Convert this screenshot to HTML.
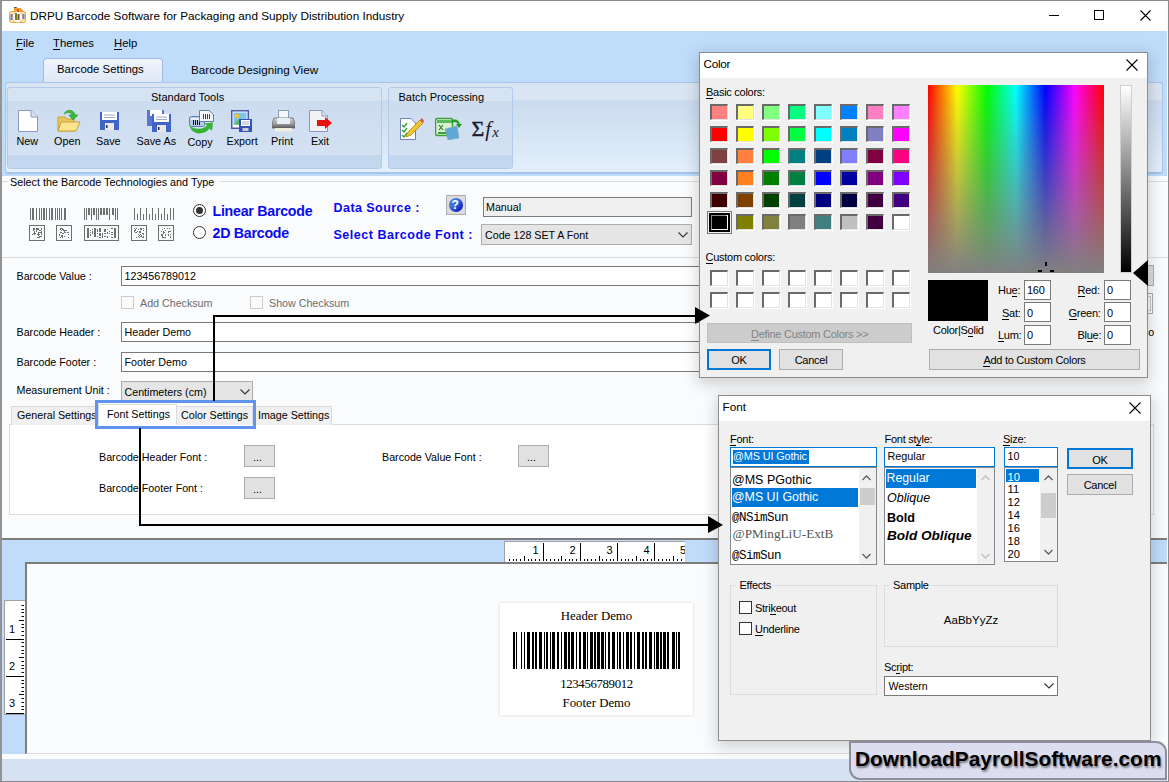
<!DOCTYPE html>
<html><head><meta charset="utf-8">
<style>
*{box-sizing:border-box;margin:0;padding:0}
html,body{width:1169px;height:782px;overflow:hidden;background:#fff}
body{position:relative;font-family:"Liberation Sans",sans-serif;font-size:10.7px;color:#000}
.a{position:absolute}
.t{position:absolute;white-space:nowrap;line-height:1}
u{text-decoration:none;border-bottom:1px solid currentColor}
.sw{width:18px;height:16px;border-style:solid;border-width:2px 1px 1px 2px;border-color:#6a6a6a #e3e3e3 #e3e3e3 #6a6a6a;box-shadow:1px 1px 0 #fff}
.dl{font-size:11px;letter-spacing:-0.27px}
.tb{width:27px;height:20px;background:#fff;border:1px solid #7a7a7a}
</style></head><body>
<!-- window frame -->
<div class="a" style="left:0;top:0;width:1169px;height:782px;border:1px solid #8a8a8a;border-left:2px solid #939393;border-right:1px solid #8a8a8a;border-bottom-width:1px;background:#f9fbfd"></div>
<!-- title bar -->
<div class="a" style="left:2px;top:1px;width:1165px;height:30px;background:#fff"></div>
<div class="t" style="left:30px;top:10px;font-size:11.75px">DRPU Barcode Software for Packaging and Supply Distribution Industry</div>

<svg class="a" style="left:9px;top:6px" width="17" height="18" viewBox="0 0 17 18"><path d="M5 1h3l-1 3h-2z" fill="#555"/><rect x="0.5" y="5.5" width="16" height="11" rx="2" fill="#f7e1b0" stroke="#e8a840"/><path d="M5 2h7l3 4h-10z" fill="#f0a030"/><ellipse cx="8.5" cy="11" rx="5" ry="5.5" fill="#fff" stroke="#f0b070" stroke-width="0.8"/><rect x="6" y="7" width="2" height="7" fill="#6a8a30"/><rect x="8.5" y="8" width="2" height="6" fill="#8a4a20"/><rect x="1.5" y="8" width="2" height="6" fill="#7080b0"/><rect x="13.5" y="8" width="2" height="5" fill="#7080b0"/><rect x="8" y="3" width="2" height="3" fill="#e05020"/></svg>
<svg class="a" style="left:1049px;top:15px" width="10" height="2" viewBox="0 0 10 2"><path d="M0 0.5H10" stroke="#000" stroke-width="1"/></svg>
<svg class="a" style="left:1094px;top:10px" width="10" height="10" viewBox="0 0 10 10"><rect x="0.5" y="0.5" width="9" height="9" fill="none" stroke="#000" stroke-width="1"/></svg>
<svg class="a" style="left:1140px;top:10px" width="11" height="11" viewBox="0 0 11 11"><path d="M0.5 0.5L10.5 10.5M10.5 0.5L0.5 10.5" stroke="#000" stroke-width="1.1"/></svg>
<!-- menu + tabstrip bg -->
<div class="a" style="left:2px;top:31px;width:1165px;height:145px;background:#bfdcfb"></div>
<div class="t" style="left:16px;top:38px;font-size:11.3px"><u>F</u>ile</div>
<div class="t" style="left:53px;top:38px;font-size:11.3px"><u>T</u>hemes</div>
<div class="t" style="left:114px;top:38px;font-size:11.3px"><u>H</u>elp</div>
<!-- tabs -->
<div class="a" style="left:43px;top:58px;width:120px;height:25px;border:1px solid #a3b8e8;border-bottom:none;border-radius:4px 4px 0 0;background:linear-gradient(#f0f4fd,#dde8f6)"></div>
<div class="t" style="left:57px;top:63.7px;font-size:11.4px">Barcode Settings</div>
<div class="t" style="left:191px;top:63.7px;font-size:11.7px">Barcode Designing View</div>
<!-- ribbon panel -->
<div class="a" style="left:5px;top:82px;width:1158px;height:92px;border:1px solid #a9c6ea;border-bottom:2px solid #a6c4ea;border-radius:3px;background:linear-gradient(#dae5f3 0,#dae5f3 17px,#cbdbee 17px,#d5e4f4 50px,#e3effc 100%)"></div>


<!-- ribbon groups -->
<div class="a" style="left:7px;top:87px;width:375px;height:82px;border:1px solid #b3cbe8;border-radius:3px;background:linear-gradient(#d6e3f3 0,#d6e3f3 13px,#ccdcef 13px,#d3e1f2 67px,#c3d7ef 67px,#c3d7ef 100%)"></div>
<div class="t" style="left:151px;top:92px;font-size:11px">Standard Tools</div>
<div class="a" style="left:388px;top:87px;width:125px;height:82px;border:1px solid #b3cbe8;border-radius:3px;background:linear-gradient(#d6e3f3 0,#d6e3f3 13px,#ccdcef 13px,#d3e1f2 67px,#c3d7ef 67px,#c3d7ef 100%)"></div>
<div class="t" style="left:398.5px;top:92px;font-size:11px">Batch Processing</div>
<div class="t" style="left:16.5px;top:136px;font-size:10.8px">New</div>
<div class="t" style="left:54px;top:136px;font-size:10.8px">Open</div>
<div class="t" style="left:96px;top:136px;font-size:10.8px">Save</div>
<div class="t" style="left:136.5px;top:136px;font-size:10.8px">Save As</div>
<div class="t" style="left:187.5px;top:137px;font-size:10.8px">Copy</div>
<div class="t" style="left:226.5px;top:136px;font-size:10.8px">Export</div>
<div class="t" style="left:271px;top:136px;font-size:10.8px">Print</div>
<div class="t" style="left:311px;top:136px;font-size:10.8px">Exit</div>
<!-- icons -->
<svg class="a" style="left:18px;top:110px" width="20" height="22" viewBox="0 0 20 22"><path d="M0.5 0.5H13L19.5 7V21.5H0.5Z" fill="#fff" stroke="#8c96c0"/><path d="M13 0.5V7H19.5" fill="#dde3ee" stroke="#8c96c0"/></svg>
<svg class="a" style="left:57px;top:109px" width="24" height="23" viewBox="0 0 24 23"><path d="M1 8H8L10 10H17V22H1Z" fill="#e8c65a" stroke="#c9a035"/><path d="M4 13H23L19 22H1Z" fill="#fbe58f" stroke="#c9a035"/><path d="M7 5C9 0 17 0 18 6L21 6L16 11L12 6L15 6C14 3 10 3 7 5Z" fill="#3cb83c" stroke="#259325" stroke-width="0.6"/></svg>
<svg class="a" style="left:100px;top:112px" width="19" height="18" viewBox="0 0 19 18"><rect x="0" y="0" width="19" height="18" fill="#3f63c6"/><rect x="2" y="0" width="15" height="8" fill="#fff"/><path d="M4 3H15M4 5.5H15" stroke="#9aa9cc"/><rect x="5" y="11" width="9" height="7" fill="#e8e8e8"/><rect x="6" y="13" width="1.5" height="3" fill="#333"/></svg>
<svg class="a" style="left:147px;top:110px" width="24" height="22" viewBox="0 0 24 22"><rect x="0" y="0" width="17" height="16" fill="#5876cf"/><rect x="3" y="0" width="12" height="6" fill="#fff"/><rect x="5" y="4" width="19" height="18" fill="#3f63c6"/><rect x="7" y="4" width="15" height="8" fill="#fff"/><path d="M9 7H20M9 9.5H20" stroke="#9aa9cc"/><rect x="10" y="15" width="9" height="7" fill="#e8e8e8"/><rect x="11" y="17" width="1.5" height="3" fill="#333"/></svg>
<svg class="a" style="left:189px;top:110px" width="25" height="24" viewBox="0 0 25 24"><rect x="0.5" y="6.5" width="15" height="10" rx="2" fill="#b9cce6" stroke="#5f7fb0"/><rect x="2" y="8" width="12" height="2" fill="#e8f0fa"/><path d="M4.5 10V15M6.5 10V15M8.5 10V15M10.5 10V15" stroke="#111" stroke-width="1"/><path d="M10.5 0.5H20L24.5 4.5V11.5H10.5Z" fill="#f4f8fd" stroke="#5f7fb0"/><path d="M14.5 4V9M16.5 4V9M18.5 4V9M20.5 4V9" stroke="#444" stroke-width="1"/><path d="M0.5 15C3 19 13 21 18 15.5L15.5 13.5L24 12.5L23 21L20.5 18.5C15 26 2 25 0.5 15Z" fill="#34b334"/></svg>
<svg class="a" style="left:231px;top:110px" width="21" height="22" viewBox="0 0 21 22"><rect x="0" y="0" width="18" height="19" fill="#4a5aa8"/><rect x="1.5" y="1.5" width="15" height="16" fill="#fff"/><rect x="2.5" y="2.5" width="13" height="12" fill="#7ec3f0"/><circle cx="6" cy="6" r="2.3" fill="#f5c02a"/><path d="M2.5 14.5L9 8L15.5 14.5Z" fill="#5cb85c"/><rect x="8" y="9" width="13" height="13" fill="#3553b8"/><rect x="10" y="10" width="9" height="6" fill="#fff"/><path d="M11 12H18M11 14H18" stroke="#8a9ac0" stroke-width="0.8"/><rect x="11.5" y="18" width="6" height="3" fill="#ccc"/></svg>
<svg class="a" style="left:272px;top:110px" width="23" height="22" viewBox="0 0 23 22"><rect x="6.5" y="0.5" width="10" height="9" fill="#f4f8fd" stroke="#8a9ac0"/><defs><linearGradient id="pg" x1="0" y1="0" x2="0" y2="1"><stop offset="0" stop-color="#d8d8d8"/><stop offset="0.6" stop-color="#9a9a9a"/><stop offset="1" stop-color="#5a5a5a"/></linearGradient></defs><path d="M2 8H21L23 14V18H0V14Z" fill="url(#pg)" stroke="#666" stroke-width="0.8"/><rect x="5" y="8" width="13" height="6" fill="#e6eef8"/><rect x="3" y="18" width="17" height="3.5" fill="#efefdf"/></svg>
<svg class="a" style="left:309px;top:110px" width="23" height="22" viewBox="0 0 23 22"><path d="M0.5 0.5H13L18.5 6V21.5H0.5Z" fill="#f2f2f2" stroke="#8c96c0"/><path d="M13 0.5V6H18.5" fill="#dde3ee" stroke="#8c96c0"/><path d="M8 10H16V7L23 13L16 19V16H8Z" fill="#e81010"/></svg>
<svg class="a" style="left:400px;top:118px" width="24" height="22" viewBox="0 0 24 22"><path d="M0.5 0.5H11L15.5 5V21.5H0.5Z" fill="#fff" stroke="#6f7fb8"/><path d="M2 7L4 9L7 5M2 12L4 14L7 10M2 17L4 19L7 15" stroke="#2ea02e" stroke-width="1.3" fill="none"/><path d="M6 19L8 14L20 2L23 5L11 17Z" fill="#f4c430" stroke="#b08a10" stroke-width="0.8"/><path d="M20 2L23 5L24 3L22 0Z" fill="#e05050"/></svg>
<svg class="a" style="left:435px;top:117px" width="29" height="23" viewBox="0 0 29 23"><rect x="0.5" y="1.5" width="17" height="17" rx="2" fill="#d8f0d0" stroke="#3da03d" stroke-width="1.5"/><rect x="2" y="3" width="14" height="3" fill="#5cb85c"/><path d="M4 8L8 13M8 8L4 13" stroke="#2e7d2e" stroke-width="1.2"/><path d="M3 16H14" stroke="#3da03d" stroke-width="2"/><path d="M10 12L22 9L24 21L13 23Z" fill="#5ea8d8" stroke="#8aa" stroke-width="0.6"/><path d="M16 4C20 1 24 3 25 7L27 7L24 11L21 7L23 7C22 5 19 4 16 6Z" fill="#1e9e1e"/></svg>
<div class="t" style="left:471.5px;top:118px;font-family:'Liberation Serif',serif;font-size:22px;color:#1a1a2a;letter-spacing:0px;-webkit-text-stroke:0.4px #1a1a2a">&Sigma;<i style="font-size:21px;-webkit-text-stroke:0;margin-left:1px">f<span style="font-size:15px;position:relative;top:1px;margin-left:1px">x</span></i></div>

<!-- main content -->
<div class="a" style="left:2px;top:181px;width:1166px;height:77px;border-top:1px solid #dcdcdc;border-bottom:1px solid #dcdcdc"></div>
<div class="a" style="left:8px;top:176px;width:212px;height:12px;background:#f9fbfd"></div>
<div class="t" style="left:10px;top:177px;font-size:10.8px">Select the Barcode Technologies and Type</div>
<!-- barcode tech icons -->
<svg class="a" style="left:26px;top:205px" width="154" height="38" viewBox="0 0 154 38" shape-rendering="crispEdges">
<path d="M4 3h1v12h-1zM6 3h2v12h-2zM10 3h1v12h-1zM13 3h1v12h-1zM15 3h1v12h-1zM17 3h2v12h-2zM20 3h1v12h-1zM23 3h1v12h-1zM25 3h2v12h-2zM29 3h1v12h-1zM31 3h1v12h-1zM33 3h1v12h-1zM35 3h1v12h-1zM38 3h2v12h-2zM58 3h1v12h-1zM60 3h1v12h-1zM62 3h2v7h-2zM65 3h1v12h-1zM67 3h2v7h-2zM70 3h1v12h-1zM72 3h1v12h-1zM74 3h2v7h-2zM77 3h2v7h-2zM80 3h2v7h-2zM83 3h1v12h-1zM86 3h2v7h-2zM89 3h1v12h-1zM91 3h1v12h-1zM108 3h1v12h-1zM111 9h1v6h-1zM114 3h1v12h-1zM117 9h1v6h-1zM120 3h1v12h-1zM123 9h1v6h-1zM126 3h1v12h-1zM129 9h1v6h-1zM132 3h1v12h-1zM135 9h1v6h-1zM138 3h1v12h-1zM141 9h1v6h-1zM144 3h1v12h-1zM147 3h1v12h-1z" fill="#6e7070"/>
<g fill="none" stroke="#6e7070" stroke-width="1"><rect x="3.5" y="20.5" width="15" height="15"/><rect x="30.5" y="20.5" width="15" height="15"/><rect x="58.5" y="20.5" width="34" height="15"/><rect x="105.5" y="20.5" width="15" height="15"/><rect x="132.5" y="20.5" width="15" height="15"/></g>
<path d="M6 29h1v1h-1zM7 23h1v1h-1zM7 24h1v1h-1zM7 25h1v1h-1zM7 28h1v1h-1zM8 23h1v1h-1zM8 24h1v1h-1zM8 26h1v1h-1zM8 27h1v1h-1zM8 28h1v1h-1zM8 29h1v1h-1zM9 28h1v1h-1zM10 23h1v1h-1zM10 24h1v1h-1zM10 25h1v1h-1zM10 26h1v1h-1zM11 23h1v1h-1zM11 24h1v1h-1zM11 29h1v1h-1zM11 32h1v1h-1zM12 23h1v1h-1zM12 24h1v1h-1zM12 27h1v1h-1zM12 28h1v1h-1zM12 29h1v1h-1zM12 30h1v1h-1zM12 32h1v1h-1zM13 25h1v1h-1zM13 27h1v1h-1zM13 29h1v1h-1zM13 31h1v1h-1zM13 32h1v1h-1zM14 25h1v1h-1zM14 27h1v1h-1zM14 31h1v1h-1zM15 23h1v1h-1zM15 24h1v1h-1zM15 26h1v1h-1zM15 27h1v1h-1zM15 28h1v1h-1zM15 29h1v1h-1zM15 31h1v1h-1zM33 29h1v1h-1zM33 30h1v1h-1zM34 23h1v1h-1zM34 24h1v1h-1zM34 27h1v1h-1zM34 32h1v1h-1zM35 23h1v1h-1zM35 25h1v1h-1zM35 27h1v1h-1zM35 30h1v1h-1zM35 31h1v1h-1zM36 23h1v1h-1zM36 24h1v1h-1zM36 28h1v1h-1zM36 30h1v1h-1zM36 31h1v1h-1zM36 32h1v1h-1zM37 24h1v1h-1zM37 25h1v1h-1zM37 28h1v1h-1zM38 25h1v1h-1zM38 26h1v1h-1zM38 27h1v1h-1zM38 31h1v1h-1zM39 25h1v1h-1zM39 27h1v1h-1zM40 25h1v1h-1zM41 27h1v1h-1zM42 27h1v1h-1zM42 29h1v1h-1zM42 32h1v1h-1zM61 23h2v1h-2zM61 24h2v1h-2zM61 25h2v1h-2zM61 26h2v1h-2zM61 27h2v1h-2zM61 28h2v1h-2zM61 29h2v1h-2zM61 30h2v1h-2zM61 31h2v1h-2zM61 32h2v1h-2zM64 25h1v1h-1zM64 27h1v1h-1zM64 29h1v1h-1zM64 30h1v1h-1zM66 24h1v1h-1zM66 26h1v1h-1zM66 27h1v1h-1zM66 28h1v1h-1zM68 23h2v1h-2zM68 24h2v1h-2zM68 25h2v1h-2zM68 26h2v1h-2zM68 27h2v1h-2zM68 28h2v1h-2zM68 29h2v1h-2zM68 30h2v1h-2zM68 31h2v1h-2zM71 24h1v1h-1zM71 25h1v1h-1zM71 26h1v1h-1zM71 28h1v1h-1zM71 31h1v1h-1zM73 23h2v1h-2zM73 24h2v1h-2zM73 25h2v1h-2zM73 26h2v1h-2zM73 28h2v1h-2zM73 29h2v1h-2zM73 30h2v1h-2zM73 32h2v1h-2zM76 28h1v1h-1zM76 29h1v1h-1zM76 30h1v1h-1zM76 31h1v1h-1zM76 32h1v1h-1zM78 24h2v1h-2zM78 25h2v1h-2zM78 26h2v1h-2zM78 28h2v1h-2zM78 31h2v1h-2zM81 24h1v1h-1zM81 27h1v1h-1zM81 28h1v1h-1zM81 31h1v1h-1zM81 32h1v1h-1zM83 26h1v1h-1zM83 28h1v1h-1zM85 23h2v1h-2zM85 27h2v1h-2zM85 29h2v1h-2zM85 32h2v1h-2zM88 23h2v1h-2zM88 24h2v1h-2zM88 25h2v1h-2zM88 26h2v1h-2zM88 27h2v1h-2zM88 28h2v1h-2zM88 29h2v1h-2zM88 30h2v1h-2zM88 31h2v1h-2zM88 32h2v1h-2zM108 23h1v1h-1zM108 25h1v1h-1zM108 26h1v1h-1zM109 24h1v1h-1zM109 25h1v1h-1zM109 27h1v1h-1zM110 23h1v1h-1zM110 27h1v1h-1zM110 32h1v1h-1zM111 26h1v1h-1zM112 24h1v1h-1zM112 29h1v1h-1zM112 31h1v1h-1zM113 26h1v1h-1zM113 27h1v1h-1zM113 30h1v1h-1zM113 32h1v1h-1zM114 23h1v1h-1zM114 24h1v1h-1zM114 26h1v1h-1zM114 27h1v1h-1zM114 29h1v1h-1zM114 31h1v1h-1zM115 23h1v1h-1zM115 24h1v1h-1zM115 30h1v1h-1zM115 31h1v1h-1zM116 28h1v1h-1zM116 32h1v1h-1zM117 23h1v1h-1zM117 25h1v1h-1zM117 28h1v1h-1zM117 29h1v1h-1zM117 31h1v1h-1zM117 32h1v1h-1zM135 26h1v1h-1zM135 29h1v1h-1zM135 30h1v1h-1zM136 24h1v1h-1zM136 29h1v1h-1zM136 30h1v1h-1zM136 31h1v1h-1zM136 32h1v1h-1zM137 26h1v1h-1zM137 27h1v1h-1zM137 28h1v1h-1zM137 32h1v1h-1zM138 23h1v1h-1zM138 27h1v1h-1zM138 32h1v1h-1zM139 25h1v1h-1zM139 29h1v1h-1zM139 30h1v1h-1zM139 32h1v1h-1zM141 23h1v1h-1zM142 26h1v1h-1zM142 27h1v1h-1zM142 29h1v1h-1zM142 30h1v1h-1zM143 23h1v1h-1zM143 26h1v1h-1zM144 26h1v1h-1zM144 29h1v1h-1zM144 31h1v1h-1zM144 32h1v1h-1z" fill="#707272"/>
</svg>
<!-- radios -->
<div class="a" style="left:193px;top:204px;width:13px;height:13px;border:1px solid #333;border-radius:50%;background:#fff"></div>
<div class="a" style="left:196px;top:207px;width:7px;height:7px;border-radius:50%;background:#333"></div>
<div class="a" style="left:193px;top:226px;width:13px;height:13px;border:1px solid #333;border-radius:50%;background:#fff"></div>
<div class="t" style="left:212.5px;top:203.8px;font-size:14.2px;font-weight:bold;color:#0a0af0;letter-spacing:-0.25px">Linear Barcode</div>
<div class="t" style="left:212.5px;top:225.8px;font-size:14.2px;font-weight:bold;color:#0a0af0;letter-spacing:-0.25px">2D Barcode</div>
<div class="t" style="left:333.5px;top:201.9px;font-size:12.5px;font-weight:bold;color:#0a0af0;letter-spacing:0.45px">Data Source :</div>
<div class="t" style="left:333.5px;top:228.6px;font-size:12.5px;font-weight:bold;color:#0a0af0;letter-spacing:0.52px">Select Barcode Font :</div>
<div class="a" style="left:446px;top:195px;width:20px;height:20px;background:#dcdcdc;border:1px solid #adadad"></div>
<div class="a" style="left:449px;top:198px;width:13.5px;height:13.5px;border-radius:50%;background:linear-gradient(135deg,#5b8ee0 0%,#3a6cd0 45%,#1a2ec0 75%,#0c1890 100%)"></div>
<div class="t" style="left:451.5px;top:198.5px;font-size:12px;font-weight:bold;color:#fff">?</div>
<div class="a" style="left:483px;top:197px;width:209px;height:20px;background:#f0f0f0;border:1px solid #7a7a7a"></div>
<div class="t" style="left:486px;top:202px;font-size:10.7px">Manual</div>
<div class="a" style="left:481px;top:224px;width:211px;height:21px;background:#e5e5e5;border:1px solid #adadad"></div>
<div class="t" style="left:485px;top:229.5px;font-size:10.7px">Code 128 SET A Font</div>
<svg class="a" style="left:678px;top:232px" width="10" height="6" viewBox="0 0 10 6"><path d="M0.5 0.5L5 5L9.5 0.5" fill="none" stroke="#333" stroke-width="1.1"/></svg>
<!-- form -->
<div class="t" style="left:16.5px;top:271.1px;font-size:10.7px">Barcode Value :</div>
<div class="a" style="left:121px;top:266px;width:990px;height:20px;background:#fff;border:1px solid #7a7a7a"></div><div class="a" style="left:1120px;top:265px;width:34px;height:21px;background:#dcdcdc;border:1px solid #adadad"></div><div class="a" style="left:1130px;top:293px;width:23px;height:21px;border:1px solid #adadad"></div><div class="a" style="left:1132px;top:296px;width:19px;height:15px;border:1px solid #c8c8c8"></div><div class="t" style="left:1143px;top:326.5px;font-size:10.7px">co</div>
<div class="t" style="left:124.5px;top:271.1px;font-size:10.7px">123456789012</div>
<div class="a" style="left:121px;top:296px;width:13px;height:13px;border:1px solid #cccccc;background:#fbfbfb"></div>
<div class="t" style="left:140px;top:297.5px;font-size:10.7px;color:#6d6d6d">Add Checksum</div>
<div class="a" style="left:250px;top:296px;width:13px;height:13px;border:1px solid #cccccc;background:#fbfbfb"></div>
<div class="t" style="left:269px;top:297.5px;font-size:10.7px;color:#6d6d6d">Show Checksum</div>
<div class="t" style="left:16.5px;top:327.2px;font-size:10.7px">Barcode Header :</div>
<div class="a" style="left:121px;top:322px;width:990px;height:20px;background:#fff;border:1px solid #7a7a7a"></div>
<div class="t" style="left:124.5px;top:327.2px;font-size:10.7px">Header Demo</div>
<div class="t" style="left:16.5px;top:357px;font-size:10.7px">Barcode Footer :</div>
<div class="a" style="left:121px;top:352px;width:990px;height:20px;background:#fff;border:1px solid #7a7a7a"></div>
<div class="t" style="left:124.5px;top:357px;font-size:10.7px">Footer Demo</div>
<div class="t" style="left:16.5px;top:385px;font-size:10.7px">Measurement Unit :</div>
<div class="a" style="left:121px;top:381px;width:132px;height:21px;background:#e5e5e5;border:1px solid #adadad"></div>
<div class="t" style="left:124.5px;top:386.5px;font-size:10.7px">Centimeters (cm)</div>
<svg class="a" style="left:239.5px;top:389px" width="10" height="6" viewBox="0 0 10 6"><path d="M0.5 0.5L5 5L9.5 0.5" fill="none" stroke="#333" stroke-width="1.1"/></svg>
<!-- tab control -->
<div class="a" style="left:9px;top:424px;width:1145px;height:91px;background:#fff;border:1px solid #dcdcdc"></div>
<div class="a" style="left:11px;top:406px;width:86px;height:19px;background:#f0f0f0;border:1px solid #dcdcdc;border-bottom:none"></div>
<div class="t" style="left:17px;top:410px;font-size:10.7px">General Settings</div>
<div class="a" style="left:98px;top:404px;width:79px;height:21px;background:#fff;border:1px solid #dcdcdc;border-bottom:none"></div>
<div class="t" style="left:107px;top:408.5px;font-size:10.7px">Font Settings</div>
<div class="a" style="left:176px;top:406px;width:77px;height:19px;background:#f0f0f0;border:1px solid #dcdcdc;border-bottom:none"></div>
<div class="t" style="left:181px;top:410px;font-size:10.7px">Color Settings</div>
<div class="a" style="left:252px;top:406px;width:80px;height:19px;background:#f0f0f0;border:1px solid #dcdcdc;border-bottom:none"></div>
<div class="t" style="left:258px;top:410px;font-size:10.7px">Image Settings</div>
<div class="t" style="left:99px;top:451.5px;font-size:10.7px">Barcode Header Font :</div>
<div class="t" style="left:99px;top:483px;font-size:10.7px">Barcode Footer Font :</div>
<div class="t" style="left:382px;top:451.5px;font-size:10.7px">Barcode Value Font :</div>
<div class="a" style="left:244px;top:445px;width:31px;height:22px;background:#e1e1e1;border:1px solid #adadad"></div>
<div class="a" style="left:244px;top:477px;width:31px;height:22px;background:#e1e1e1;border:1px solid #adadad"></div>
<div class="a" style="left:518px;top:445px;width:31px;height:22px;background:#e1e1e1;border:1px solid #adadad"></div>
<div class="t" style="left:253px;top:452px;font-size:10.7px">...</div>
<div class="t" style="left:253px;top:484px;font-size:10.7px">...</div>
<div class="t" style="left:527px;top:452px;font-size:10.7px">...</div>
<!-- highlight rect -->
<div class="a" style="left:95px;top:400px;width:161px;height:29px;border:3px solid #5f93f0"></div>
<!-- designer -->
<div class="a" style="left:2px;top:538px;width:1165px;height:216px;background:#c0dcfa;border-top:2px solid #7d7d7d"></div>
<div class="a" style="left:25px;top:562px;width:1142px;height:192px;background:#f9fbfd;border-top:2px solid #7d7d7d;border-left:2px solid #7d7d7d;border-bottom:1px solid #dcdcdc"></div>
<!-- horizontal ruler -->
<svg class="a" style="left:504px;top:541px" width="181" height="21" viewBox="0 0 181 21">
<rect x="0.5" y="0.5" width="181" height="21" fill="#fff" stroke="#a0a0a0"/>
<path d="M5.5 18V20 M9.5 18V20 M12.5 18V20 M16.5 18V20 M20.5 15V20 M24.5 18V20 M27.5 18V20 M31.5 18V20 M35.5 18V20 M39.5 2V20 M42.5 18V20 M46.5 18V20 M50.5 18V20 M54.5 18V20 M57.5 15V20 M61.5 18V20 M65.5 18V20 M68.5 18V20 M72.5 18V20 M76.5 2V20 M80.5 18V20 M83.5 18V20 M87.5 18V20 M91.5 18V20 M95.5 15V20 M98.5 18V20 M102.5 18V20 M106.5 18V20 M109.5 18V20 M113.5 2V20 M117.5 18V20 M121.5 18V20 M124.5 18V20 M128.5 18V20 M132.5 15V20 M136.5 18V20 M139.5 18V20 M143.5 18V20 M147.5 18V20 M150.5 2V20 M154.5 18V20 M158.5 18V20 M162.5 18V20 M165.5 18V20 M169.5 15V20 M173.5 18V20 M177.5 18V20" stroke="#000" stroke-width="1"/>
<g font-family="Liberation Sans" font-size="11" fill="#000"><text x="28.5" y="12.5">1</text><text x="65.5" y="12.5">2</text><text x="102.5" y="12.5">3</text><text x="139.5" y="12.5">4</text><text x="176" y="12.5">5</text></g>
</svg>
<!-- vertical ruler -->
<svg class="a" style="left:4px;top:600px" width="21" height="115" viewBox="0 0 21 115">
<rect x="0.5" y="0.5" width="21" height="114" fill="#fff" stroke="#a0a0a0"/>
<path d="M17.5 5.5H20 M17.5 9.5H20 M17.5 12.5H20 M17.5 16.5H20 M15 20.5H20 M17.5 24.5H20 M17.5 27.5H20 M17.5 31.5H20 M17.5 35.5H20 M2 39.5H20 M17.5 42.5H20 M17.5 46.5H20 M17.5 50.5H20 M17.5 53.5H20 M15 57.5H20 M17.5 61.5H20 M17.5 65.5H20 M17.5 68.5H20 M17.5 72.5H20 M2 76.5H20 M17.5 80.5H20 M17.5 83.5H20 M17.5 87.5H20 M17.5 91.5H20 M15 94.5H20 M17.5 98.5H20 M17.5 102.5H20 M17.5 106.5H20 M17.5 109.5H20 M2 113.5H20" stroke="#000" stroke-width="1"/>
<g font-family="Liberation Sans" font-size="11" fill="#000"><text x="5" y="32.5">1</text><text x="5" y="69.5">2</text><text x="5" y="107">3</text></g>
</svg>
<!-- label -->
<div class="a" style="left:500px;top:603px;width:193px;height:112px;background:#fff;box-shadow:0 0 2px 1px rgba(0,0,0,0.08)"></div>
<div class="t" style="left:500px;top:610.2px;width:193px;text-align:center;font-family:'Liberation Serif',serif;font-size:12.8px">Header Demo</div>
<svg class="a" style="left:513px;top:632px" width="167" height="37" viewBox="0 0 167 37"><path d="M0 0h2v37h-2zM3 0h1v37h-1zM8 0h1v37h-1zM11 0h1v37h-1zM14 0h3v37h-3zM19 0h2v37h-2zM22 0h2v37h-2zM26 0h3v37h-3zM31 0h1v37h-1zM33 0h2v37h-2zM37 0h1v37h-1zM39 0h3v37h-3zM44 0h2v37h-2zM48 0h1v37h-1zM51 0h3v37h-3zM55 0h2v37h-2zM58 0h3v37h-3zM63 0h1v37h-1zM66 0h2v37h-2zM70 0h3v37h-3zM74 0h1v37h-1zM77 0h3v37h-3zM81 0h2v37h-2zM84 0h3v37h-3zM88 0h3v37h-3zM92 0h1v37h-1zM95 0h2v37h-2zM99 0h3v37h-3zM104 0h1v37h-1zM106 0h2v37h-2zM110 0h1v37h-1zM113 0h3v37h-3zM117 0h2v37h-2zM121 0h1v37h-1zM124 0h3v37h-3zM129 0h2v37h-2zM132 0h2v37h-2zM136 0h3v37h-3zM141 0h1v37h-1zM143 0h3v37h-3zM147 0h2v37h-2zM150 0h3v37h-3zM154 0h2v37h-2zM159 0h3v37h-3zM163 0h1v37h-1zM165 0h2v37h-2z" fill="#000"/></svg>
<div class="t" style="left:500px;top:677.5px;width:193px;text-align:center;font-family:'Liberation Serif',serif;font-size:12.8px;letter-spacing:-0.35px">123456789012</div>
<div class="t" style="left:500px;top:697.3px;width:193px;text-align:center;font-family:'Liberation Serif',serif;font-size:12.8px">Footer Demo</div>
<!-- status bar -->
<div class="a" style="left:2px;top:754px;width:1165px;height:5px;background:#fbfcfe"></div>
<div class="a" style="left:2px;top:759px;width:1165px;height:22px;background:#d6e2f2"></div>
<div class="a" style="left:0;top:781px;width:1169px;height:1px;background:#8a8a8a"></div>

<!-- COLOR DIALOG -->
<div class="a" style="left:699px;top:52px;width:449px;height:326px;background:#f0f0f0;border:1px solid #8c8c8c;box-shadow:0 4px 14px 2px rgba(0,0,0,0.17)"></div>
<div class="a" style="left:700px;top:53px;width:447px;height:25px;background:#fff"></div>
<div class="t" style="left:703.5px;top:58.6px;font-size:11.8px;letter-spacing:-0.3px">Color</div>
<svg class="a" style="left:1126px;top:59px" width="12" height="12" viewBox="0 0 12 12"><path d="M0.5 0.5L11.5 11.5M11.5 0.5L0.5 11.5" stroke="#000" stroke-width="1.1"/></svg>
<div class="t dl" style="left:706px;top:86.5px"><u>B</u>asic colors:</div>
<div class="a sw" style="left:710px;top:104px;background:#ff8080"></div><div class="a sw" style="left:736px;top:104px;background:#ffff80"></div><div class="a sw" style="left:762px;top:104px;background:#80ff80"></div><div class="a sw" style="left:788px;top:104px;background:#00ff80"></div><div class="a sw" style="left:814px;top:104px;background:#80ffff"></div><div class="a sw" style="left:840px;top:104px;background:#0080ff"></div><div class="a sw" style="left:866px;top:104px;background:#ff80c0"></div><div class="a sw" style="left:892px;top:104px;background:#ff80ff"></div><div class="a sw" style="left:710px;top:126px;background:#ff0000"></div><div class="a sw" style="left:736px;top:126px;background:#ffff00"></div><div class="a sw" style="left:762px;top:126px;background:#80ff00"></div><div class="a sw" style="left:788px;top:126px;background:#00ff40"></div><div class="a sw" style="left:814px;top:126px;background:#00ffff"></div><div class="a sw" style="left:840px;top:126px;background:#0080c0"></div><div class="a sw" style="left:866px;top:126px;background:#8080c0"></div><div class="a sw" style="left:892px;top:126px;background:#ff00ff"></div><div class="a sw" style="left:710px;top:148px;background:#804040"></div><div class="a sw" style="left:736px;top:148px;background:#ff8040"></div><div class="a sw" style="left:762px;top:148px;background:#00ff00"></div><div class="a sw" style="left:788px;top:148px;background:#008080"></div><div class="a sw" style="left:814px;top:148px;background:#004080"></div><div class="a sw" style="left:840px;top:148px;background:#8080ff"></div><div class="a sw" style="left:866px;top:148px;background:#800040"></div><div class="a sw" style="left:892px;top:148px;background:#ff0080"></div><div class="a sw" style="left:710px;top:170px;background:#800040"></div><div class="a sw" style="left:736px;top:170px;background:#ff8020"></div><div class="a sw" style="left:762px;top:170px;background:#008000"></div><div class="a sw" style="left:788px;top:170px;background:#008040"></div><div class="a sw" style="left:814px;top:170px;background:#0000ff"></div><div class="a sw" style="left:840px;top:170px;background:#0000a0"></div><div class="a sw" style="left:866px;top:170px;background:#800080"></div><div class="a sw" style="left:892px;top:170px;background:#8000ff"></div><div class="a sw" style="left:710px;top:192px;background:#400000"></div><div class="a sw" style="left:736px;top:192px;background:#804000"></div><div class="a sw" style="left:762px;top:192px;background:#004000"></div><div class="a sw" style="left:788px;top:192px;background:#004040"></div><div class="a sw" style="left:814px;top:192px;background:#000080"></div><div class="a sw" style="left:840px;top:192px;background:#000040"></div><div class="a sw" style="left:866px;top:192px;background:#400040"></div><div class="a sw" style="left:892px;top:192px;background:#400080"></div><div class="a sw" style="left:710px;top:214px;background:#000000"></div><div class="a sw" style="left:736px;top:214px;background:#808000"></div><div class="a sw" style="left:762px;top:214px;background:#808040"></div><div class="a sw" style="left:788px;top:214px;background:#808080"></div><div class="a sw" style="left:814px;top:214px;background:#408080"></div><div class="a sw" style="left:840px;top:214px;background:#c0c0c0"></div><div class="a sw" style="left:866px;top:214px;background:#400040"></div><div class="a sw" style="left:892px;top:214px;background:#ffffff"></div>
<svg class="a" style="left:707px;top:211px" width="25" height="23" viewBox="0 0 25 23"><rect x="0.5" y="0.5" width="24" height="22" fill="#f0f0f0" stroke="#000" stroke-dasharray="1,1"/><rect x="3" y="3" width="19" height="17" fill="none" stroke="#000" stroke-width="2"/><rect x="4" y="4" width="17" height="15" fill="#fff"/><path d="M4 4H20L19 5H5V18L4 19Z" fill="#8a8a8a"/><rect x="5" y="5" width="15" height="13" fill="#000"/></svg>
<div class="t dl" style="left:705.5px;top:252px"><u>C</u>ustom colors:</div>
<div class="a sw" style="left:710px;top:270px;background:#fff"></div><div class="a sw" style="left:736px;top:270px;background:#fff"></div><div class="a sw" style="left:762px;top:270px;background:#fff"></div><div class="a sw" style="left:788px;top:270px;background:#fff"></div><div class="a sw" style="left:814px;top:270px;background:#fff"></div><div class="a sw" style="left:840px;top:270px;background:#fff"></div><div class="a sw" style="left:866px;top:270px;background:#fff"></div><div class="a sw" style="left:892px;top:270px;background:#fff"></div><div class="a sw" style="left:710px;top:292px;background:#fff"></div><div class="a sw" style="left:736px;top:292px;background:#fff"></div><div class="a sw" style="left:762px;top:292px;background:#fff"></div><div class="a sw" style="left:788px;top:292px;background:#fff"></div><div class="a sw" style="left:814px;top:292px;background:#fff"></div><div class="a sw" style="left:840px;top:292px;background:#fff"></div><div class="a sw" style="left:866px;top:292px;background:#fff"></div><div class="a sw" style="left:892px;top:292px;background:#fff"></div>
<div class="a" style="left:707px;top:323px;width:205px;height:20px;background:#cccccc;border:1px solid #bfbfbf"></div>
<div class="t dl" style="left:751px;top:328.5px;color:#838383"><u>D</u>efine Custom Colors &gt;&gt;</div>
<div class="a" style="left:707px;top:349px;width:64px;height:21px;background:#e1e1e1;border:2px solid #0078d7"></div>
<div class="t dl" style="left:707px;top:354.5px;width:64px;text-align:center">OK</div>
<div class="a" style="left:779px;top:349px;width:64px;height:21px;background:#e1e1e1;border:1px solid #adadad"></div>
<div class="t dl" style="left:779px;top:354.5px;width:64px;text-align:center">Cancel</div>
<!-- spectrum -->
<div class="a" style="left:928px;top:85px;width:176px;height:188px;background:linear-gradient(to bottom,rgba(128,128,128,0),rgba(128,128,128,1)),linear-gradient(to right,#ff0000 0%,#ffff00 16.7%,#00ff00 33.3%,#00ffff 50%,#0000ff 66.7%,#ff00ff 83.3%,#ff0000 100%)"></div>
<div class="a" style="left:1120px;top:85px;width:12px;height:188px;background:linear-gradient(#fff,#000);border:1px solid #d0d0d0"></div>
<svg class="a" style="left:1132px;top:259px" width="16" height="28" viewBox="0 0 16 28"><path d="M1 14L16 1V27Z" fill="#000"/></svg>
<svg class="a" style="left:1037px;top:262px" width="19" height="11" viewBox="0 0 19 11"><path d="M8 0h2v4h-2zM1 8h4v2h-4zM13 8h4v2h-4z" fill="#000"/></svg>
<div class="a" style="left:928px;top:280px;width:60px;height:41px;background:#000"></div>
<div class="t dl" style="left:933px;top:325px">Color|S<u>o</u>lid</div>
<div class="t dl" style="left:998px;top:285px">Hu<u>e</u>:</div>
<div class="t dl" style="left:1002px;top:307.5px"><u>S</u>at:</div>
<div class="t dl" style="left:998px;top:330px"><u>L</u>um:</div>
<div class="t dl" style="left:1077.5px;top:285px"><u>R</u>ed:</div>
<div class="t dl" style="left:1068.5px;top:307.5px"><u>G</u>reen:</div>
<div class="t dl" style="left:1077.5px;top:330px">Bl<u>u</u>e:</div>
<div class="a tb" style="left:1024px;top:280px"></div><div class="t dl" style="left:1027px;top:285px">160</div>
<div class="a tb" style="left:1024px;top:302px"></div><div class="t dl" style="left:1027px;top:307.5px">0</div>
<div class="a tb" style="left:1024px;top:325px"></div><div class="t dl" style="left:1027px;top:330px">0</div>
<div class="a tb" style="left:1104px;top:280px"></div><div class="t dl" style="left:1107px;top:285px">0</div>
<div class="a tb" style="left:1104px;top:302px"></div><div class="t dl" style="left:1107px;top:307.5px">0</div>
<div class="a tb" style="left:1104px;top:325px"></div><div class="t dl" style="left:1107px;top:330px">0</div>
<div class="a" style="left:929px;top:349px;width:211px;height:21px;background:#e1e1e1;border:1px solid #adadad"></div>
<div class="t dl" style="left:929px;top:354.5px;width:211px;text-align:center"><u>A</u>dd to Custom Colors</div>

<!-- FONT DIALOG -->
<div class="a" style="left:718px;top:395px;width:433px;height:346px;background:#f0f0f0;border:1px solid #8c8c8c;box-shadow:0 4px 14px 2px rgba(0,0,0,0.17)"></div>
<div class="a" style="left:719px;top:396px;width:431px;height:25px;background:#fff"></div>
<div class="t" style="left:722.5px;top:401.8px;font-size:11.8px">Font</div>
<svg class="a" style="left:1129px;top:402px" width="12" height="12" viewBox="0 0 12 12"><path d="M0.5 0.5L11.5 11.5M11.5 0.5L0.5 11.5" stroke="#000" stroke-width="1.1"/></svg>
<div class="t dl" style="left:730px;top:433.7px"><u>F</u>ont:</div>
<div class="t dl" style="left:884.5px;top:433.7px">Font st<u>y</u>le:</div>
<div class="t dl" style="left:1003px;top:433.7px"><u>S</u>ize:</div>
<!-- textboxes -->
<div class="a" style="left:730px;top:447px;width:147px;height:20px;background:#fff;border:1px solid #0078d7"></div>
<div class="a" style="left:733px;top:450px;width:76px;height:14px;background:#0078d7"></div>
<div class="t" style="left:733px;top:451.2px;font-size:10.8px;color:#fff;letter-spacing:-0.1px">@MS UI Gothic</div>
<div class="a" style="left:884px;top:447px;width:111px;height:20px;background:#fff;border:1px solid #0078d7"></div>
<div class="t" style="left:887.5px;top:451.2px;font-size:10.8px">Regular</div>
<div class="a" style="left:1004px;top:447px;width:54px;height:20px;background:#fff;border:1px solid #0078d7"></div>
<div class="t" style="left:1007.5px;top:451.2px;font-size:10.8px">10</div>
<!-- font list -->
<div class="a" style="left:730px;top:467px;width:147px;height:98px;background:#fff;border:1px solid #828790"></div>
<div class="a" style="left:859px;top:468px;width:17px;height:96px;background:#f0f0f0"></div>
<div class="a" style="left:860px;top:488px;width:15px;height:17px;background:#cdcdcd"></div>
<svg class="a" style="left:862px;top:475px" width="9" height="6" viewBox="0 0 9 6"><path d="M0.5 5L4.5 1L8.5 5" fill="none" stroke="#606060" stroke-width="1.3"/></svg><svg class="a" style="left:862px;top:553px" width="9" height="6" viewBox="0 0 9 6"><path d="M0.5 1L4.5 5L8.5 1" fill="none" stroke="#606060" stroke-width="1.3"/></svg>
<div class="a" style="left:732px;top:488px;width:126px;height:19px;background:#0078d7"></div>
<div class="t" style="left:732px;top:473.5px;font-size:12.5px">@MS PGothic</div>
<div class="t" style="left:732px;top:491px;font-size:12.4px;color:#fff">@MS UI Gothic</div>
<div class="t" style="left:732px;top:512.2px;font-family:'Liberation Mono',monospace;font-size:12.5px;letter-spacing:-0.5px">@NSimSun</div>
<div class="t" style="left:732.5px;top:527px;font-family:'Liberation Serif',serif;font-size:13.2px;color:#555">@PMingLiU-ExtB</div>
<div class="t" style="left:732px;top:550.2px;font-family:'Liberation Mono',monospace;font-size:12.5px;letter-spacing:-0.5px">@SimSun</div>
<!-- style list -->
<div class="a" style="left:884px;top:467px;width:111px;height:98px;background:#fff;border:1px solid #828790"></div>
<div class="a" style="left:977px;top:468px;width:17px;height:96px;background:#f0f0f0"></div>
<svg class="a" style="left:981px;top:475px" width="9" height="6" viewBox="0 0 9 6"><path d="M0.5 5L4.5 1L8.5 5" fill="none" stroke="#bfbfbf" stroke-width="1.3"/></svg><svg class="a" style="left:981px;top:553px" width="9" height="6" viewBox="0 0 9 6"><path d="M0.5 1L4.5 5L8.5 1" fill="none" stroke="#bfbfbf" stroke-width="1.3"/></svg>
<div class="a" style="left:886px;top:469px;width:90px;height:19px;background:#0078d7"></div>
<div class="t" style="left:886.5px;top:472px;font-size:12.3px;color:#fff">Regular</div>
<div class="t" style="left:887px;top:491.5px;font-size:12.5px;font-style:italic">Oblique</div>
<div class="t" style="left:887px;top:511.5px;font-size:12.6px;font-weight:bold">Bold</div>
<div class="t" style="left:887px;top:528.5px;font-size:13.6px;font-weight:bold;font-style:italic">Bold Oblique</div>
<!-- size list -->
<div class="a" style="left:1004px;top:467px;width:54px;height:95px;background:#fff;border:1px solid #828790"></div>
<div class="a" style="left:1040px;top:468px;width:17px;height:93px;background:#f0f0f0"></div>
<div class="a" style="left:1041px;top:493px;width:15px;height:25px;background:#cdcdcd"></div>
<svg class="a" style="left:1044px;top:475px" width="9" height="6" viewBox="0 0 9 6"><path d="M0.5 5L4.5 1L8.5 5" fill="none" stroke="#606060" stroke-width="1.3"/></svg><svg class="a" style="left:1044px;top:549px" width="9" height="6" viewBox="0 0 9 6"><path d="M0.5 1L4.5 5L8.5 1" fill="none" stroke="#606060" stroke-width="1.3"/></svg>
<div class="a" style="left:1006px;top:469px;width:33px;height:13px;background:#0078d7"></div>
<div class="t" style="left:1007.5px;top:471.6px;font-size:11.2px;color:#fff">10</div>
<div class="t" style="left:1007.5px;top:484.1px;font-size:11.2px">11</div>
<div class="t" style="left:1007.5px;top:497.4px;font-size:11.2px">12</div>
<div class="t" style="left:1007.5px;top:510.2px;font-size:11.2px">14</div>
<div class="t" style="left:1007.5px;top:523.1px;font-size:11.2px">16</div>
<div class="t" style="left:1007.5px;top:535.7px;font-size:11.2px">18</div>
<div class="t" style="left:1007.5px;top:548.7px;font-size:11.2px">20</div>
<!-- buttons -->
<div class="a" style="left:1067px;top:448px;width:66px;height:21px;background:#e1e1e1;border:2px solid #0078d7"></div>
<div class="t dl" style="left:1067px;top:454.5px;width:66px;text-align:center">OK</div>
<div class="a" style="left:1067px;top:474px;width:66px;height:21px;background:#e1e1e1;border:1px solid #adadad"></div>
<div class="t dl" style="left:1067px;top:479.5px;width:66px;text-align:center">Cancel</div>
<!-- effects -->
<div class="a" style="left:730px;top:585px;width:147px;height:110px;border:1px solid #dcdcdc"></div>
<div class="a" style="left:736px;top:580px;width:39px;height:10px;background:#f0f0f0"></div>
<div class="t dl" style="left:739.5px;top:580.2px">Effects</div>
<div class="a" style="left:739px;top:601px;width:13px;height:13px;background:#fff;border:1px solid #333"></div>
<div class="t dl" style="left:755px;top:602.9px">Stri<u>k</u>eout</div>
<div class="a" style="left:739px;top:622px;width:13px;height:13px;background:#fff;border:1px solid #333"></div>
<div class="t dl" style="left:755px;top:623.9px"><u>U</u>nderline</div>
<!-- sample -->
<div class="a" style="left:884px;top:585px;width:174px;height:62px;border:1px solid #dcdcdc"></div>
<div class="a" style="left:890px;top:580px;width:40px;height:10px;background:#f0f0f0"></div>
<div class="t dl" style="left:893px;top:580.2px">Sample</div>
<div class="t" style="left:884px;top:615.3px;width:174px;text-align:center;font-size:11.5px">AaBbYyZz</div>
<div class="t dl" style="left:884px;top:661.7px">Sc<u>r</u>ipt:</div>
<div class="a" style="left:884px;top:676px;width:174px;height:20px;background:#fff;border:1px solid #7a7a7a"></div>
<div class="t" style="left:888.5px;top:681.2px;font-size:10.6px">Western</div>
<svg class="a" style="left:1044px;top:683px" width="10" height="6" viewBox="0 0 10 6"><path d="M0.5 0.5L5 5L9.5 0.5" fill="none" stroke="#333" stroke-width="1.1"/></svg>
<!-- watermark -->
<div class="a" style="left:849px;top:741px;width:318px;height:39px;background:#dcdef0;border:2px solid #8c8e9c;border-radius:0 11px 0 11px"></div>
<div class="t" style="left:855px;top:749px;font-size:20.9px;font-weight:bold;color:#000;text-shadow:1px 2px 2px rgba(0,0,0,0.45)">DownloadPayrollSoftware.com</div>
<!-- connector lines -->
<div class="a" style="left:213px;top:315px;width:2px;height:86px;background:#000"></div>
<div class="a" style="left:213px;top:315px;width:483px;height:2px;background:#000"></div>
<svg class="a" style="left:695px;top:307px" width="16" height="18" viewBox="0 0 16 18"><path d="M0 0L15 8.5L0 17Z" fill="#000"/></svg>
<div class="a" style="left:139px;top:428px;width:2px;height:98px;background:#000"></div>
<div class="a" style="left:139px;top:524px;width:570px;height:2px;background:#000"></div>
<svg class="a" style="left:708px;top:516px" width="16" height="18" viewBox="0 0 16 18"><path d="M0 0L15 9L0 17Z" fill="#000"/></svg>

</body></html>
